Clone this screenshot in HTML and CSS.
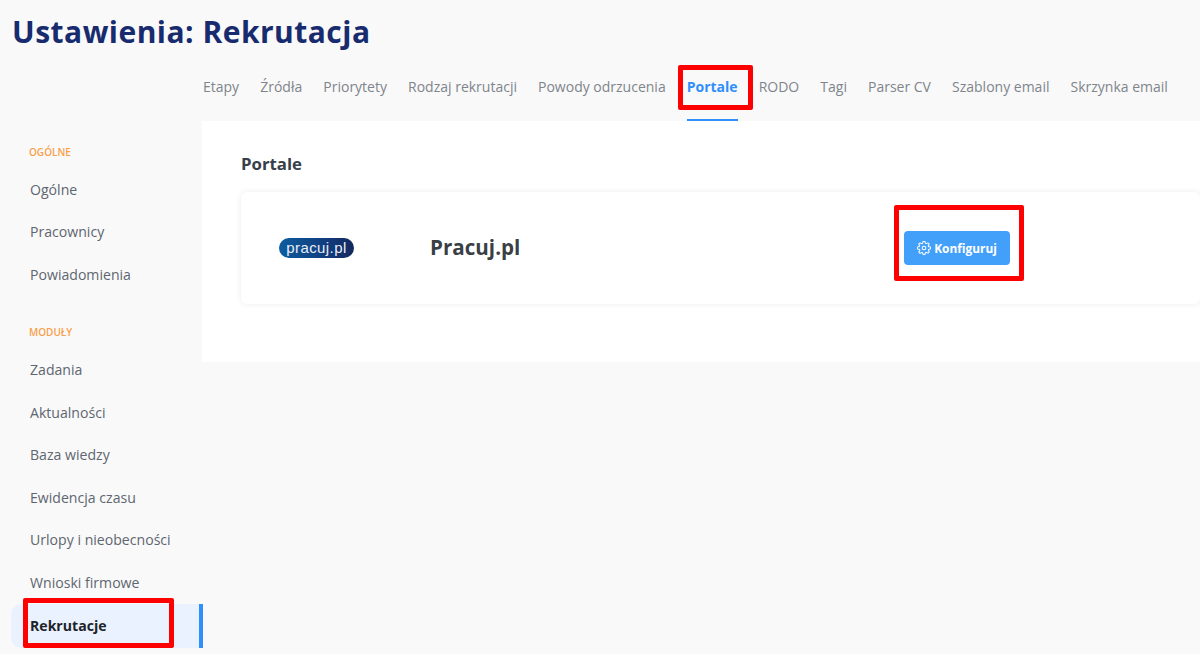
FILE: index.html
```html
<!DOCTYPE html>
<html lang="pl">
<head>
  <meta charset="UTF-8" />
  <title>Ustawienia: Rekrutacja</title>
  <link rel="stylesheet" href="styles.css">
</head>
<body>
  <h1 class="title">Ustawienia: Rekrutacja</h1>

  <nav class="tabs">
    <a class="tab">Etapy</a>
    <a class="tab">Źródła</a>
    <a class="tab">Priorytety</a>
    <a class="tab">Rodzaj rekrutacji</a>
    <a class="tab">Powody odrzucenia</a>
    <a class="tab tab-active">Portale<span class="mark mark-tab"></span></a>
    <a class="tab">RODO</a>
    <a class="tab">Tagi</a>
    <a class="tab">Parser CV</a>
    <a class="tab">Szablony email</a>
    <a class="tab">Skrzynka email</a>
  </nav>

  <div class="layout">
    <aside class="sidebar">
      <div class="side-label">OGÓLNE</div>
      <a class="side-item">Ogólne</a>
      <a class="side-item">Pracownicy</a>
      <a class="side-item">Powiadomienia</a>

      <div class="side-label side-label-next">MODUŁY</div>
      <a class="side-item">Zadania</a>
      <a class="side-item">Aktualności</a>
      <a class="side-item">Baza wiedzy</a>
      <a class="side-item">Ewidencja czasu</a>
      <a class="side-item">Urlopy i nieobecności</a>
      <a class="side-item">Wnioski firmowe</a>
      <a class="side-item side-active">Rekrutacje<span class="mark mark-side"></span></a>
    </aside>

    <main class="panel">
      <h2 class="panel-title">Portale</h2>
      <div class="card">
        <div class="logo"><span class="logo-text">pracuj.pl</span></div>
        <div class="portal-name">Pracuj.pl</div>
        <button class="btn">
          <svg class="btn-icon" viewBox="0.5 0.5 23 23" fill="none" stroke="currentColor" stroke-width="1.7" stroke-linecap="round" stroke-linejoin="round">
            <circle cx="12" cy="12" r="3"></circle>
            <path d="M19.4 15a1.65 1.65 0 0 0 .33 1.82l.06.06a2 2 0 1 1-2.83 2.83l-.06-.06a1.65 1.65 0 0 0-2.82 1.17V21a2 2 0 1 1-4 0v-.09a1.65 1.65 0 0 0-2.82-1.12l-.06.06a2 2 0 1 1-2.83-2.83l.06-.06A1.65 1.65 0 0 0 3.09 14H3a2 2 0 1 1 0-4h.09a1.65 1.65 0 0 0 1.17-2.82l-.06-.06a2 2 0 1 1 2.83-2.83l.06.06A1.65 1.65 0 0 0 10 3.09V3a2 2 0 1 1 4 0v.09a1.65 1.65 0 0 0 2.82 1.17l.06-.06a2 2 0 1 1 2.83 2.83l-.06.06A1.65 1.65 0 0 0 20.91 10H21a2 2 0 1 1 0 4h-.09a1.65 1.65 0 0 0-1.51 1z"></path>
          </svg>
          Konfiguruj
          <span class="mark mark-btn"></span>
        </button>
      </div>
    </main>
  </div>
</body>
</html>
```

FILE: styles.css
```css
html, body {
  height: 654px;
  overflow: hidden;
}
body {
  margin: 0;
  background-color: #f9f9f9;
  font-family: "Open Sans", "Noto Sans", sans-serif;
  color: #5e6670;
}
.title {
  margin: 0;
  padding: 11px 0 0 12px;
  height: 43px;
  font-size: 30px;
  line-height: 42px;
  font-weight: 700;
  color: #172b6e;
  letter-spacing: 0.48px;
}
.tabs {
  display: flex;
  gap: 21.05px;
  height: 67px;
  padding-left: 203px;
  align-items: flex-start;
}
.tab {
  position: relative;
  display: block;
  height: 67px;
  font-size: 14px;
  line-height: 66px;
  color: #7f858c;
}
.tab-active {
  color: #2f8ffb;
  font-weight: 700;
  box-shadow: inset 0 -2px 0 #2f8ffb;
}
.layout {
  display: flex;
  align-items: flex-start;
}
.sidebar {
  width: 202px;
  flex-shrink: 0;
  padding-top: 25px;
}
.side-label {
  padding-left: 29px;
  height: 12px;
  font-size: 10px;
  line-height: 12px;
  font-weight: 600;
  color: #f9a04b;
  margin-bottom: 10.7px;
}
.side-label-next {
  margin-top: 29.6px;
  margin-bottom: 11px;
}
.side-item {
  position: relative;
  display: block;
  height: 42.6px;
  padding-left: 30px;
  font-size: 14.1px;
  line-height: 42.6px;
  color: #5e6670;
}
.side-active {
  height: 44px;
  line-height: 44px;
  margin-top: -0.5px;
  margin-left: 11px;
  padding-left: 19px;
  width: 169px;
  border-right: 4px solid #2f8ffb;
  background-color: #e9f2fe;
  border-radius: 10px 0 0 10px;
  font-weight: 700;
  color: #1e2329;
}
.panel {
  flex: 1;
  height: 241px;
  padding: 32px 0 0 39px;
  background-color: #fff;
  box-sizing: border-box;
}
.panel-title {
  margin: 0 0 17px;
  font-size: 16.8px;
  line-height: 22px;
  font-weight: 700;
  color: #36404a;
}
.card {
  display: flex;
  align-items: center;
  height: 112px;
  background-color: #fff;
  border-radius: 6px;
  box-shadow: 0 0 6px rgba(0, 0, 0, 0.08);
}
.logo {
  width: 75px;
  height: 20px;
  margin-left: 38px;
  border-radius: 10px;
  background: linear-gradient(90deg, #0d5c9e, #12397a 70%, #14285c);
  text-align: center;
  flex-shrink: 0;
}
.logo-text {
  font-family: "Liberation Sans", Arial, sans-serif;
  font-size: 15px;
  letter-spacing: 0.4px;
  line-height: 19px;
  color: #e8eef6;
  display: block;
}
.portal-name {
  width: 474px;
  margin-left: 76px;
  margin-top: -2px;
  flex-shrink: 0;
  font-size: 20.6px;
  font-weight: 700;
  color: #3a3f45;
}
.btn {
  position: relative;
  display: flex;
  align-items: center;
  justify-content: center;
  gap: 3px;
  width: 106px;
  height: 34px;
  padding: 0;
  border: none;
  border-radius: 4px;
  background-color: #42a0fb;
  color: #fff;
  font-family: inherit;
  font-size: 11.9px;
  font-weight: 700;
}
.btn-icon {
  width: 14px;
  height: 14px;
}
/* czerwone ramki z adnotacji */
.mark {
  position: absolute;
  border: 5px solid #ff0000;
  border-radius: 2px;
  box-sizing: border-box;
}
.mark-tab {
  left: -9px;
  top: 11px;
  width: 75px;
  height: 45px;
}
.mark-side {
  left: 12px;
  top: -6px;
  width: 151px;
  height: 50px;
}
.mark-btn {
  left: -10px;
  top: -26px;
  width: 130px;
  height: 76px;
}
```
